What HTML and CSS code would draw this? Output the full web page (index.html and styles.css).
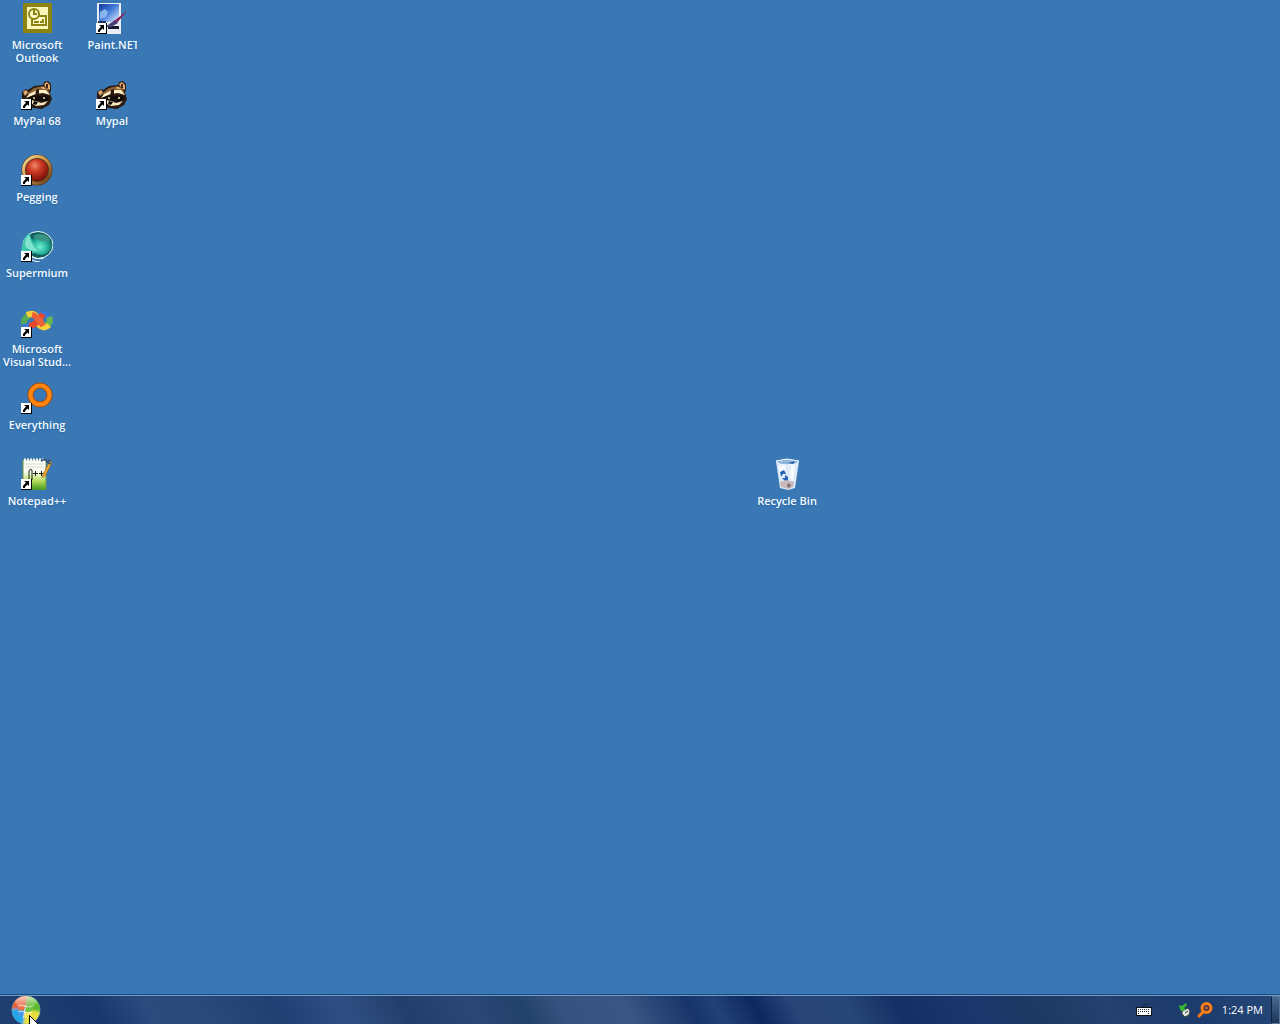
FILE: index.html
```html
<!DOCTYPE html>
<html lang="en">
<head>
<meta charset="utf-8">
<title>Desktop</title>
<link rel="stylesheet" href="styles.css">
</head>
<body>
<svg class="defs" aria-hidden="true">
  <defs>
    <radialGradient id="red" cx=".4" cy=".3" r=".7"><stop offset="0" stop-color="#f08a6c"/><stop offset=".4" stop-color="#cf3a24"/><stop offset="1" stop-color="#7c1008"/></radialGradient>
    <linearGradient id="gold" x1="0" y1="0" x2="1" y2="1"><stop offset="0" stop-color="#f6dc94"/><stop offset=".5" stop-color="#c98f42"/><stop offset="1" stop-color="#5c3616"/></linearGradient>
    <radialGradient id="teal" cx=".45" cy=".6" r=".6"><stop offset="0" stop-color="#6df0d0"/><stop offset=".6" stop-color="#25b09a"/><stop offset="1" stop-color="#0f6663"/></radialGradient>
    <linearGradient id="sky" x1="0" y1="0" x2="1" y2="1"><stop offset="0" stop-color="#123a9c"/><stop offset=".45" stop-color="#3f78d8"/><stop offset="1" stop-color="#e4f0ff"/></linearGradient>
    <linearGradient id="note" x1="0" y1="0" x2="0" y2="1"><stop offset=".4" stop-color="#fbfdf2"/><stop offset=".7" stop-color="#b5dc5a"/><stop offset="1" stop-color="#3f9a1e"/></linearGradient>
    <linearGradient id="shine" x1="0" y1="0" x2="0" y2="1"><stop offset="0" stop-color="#fff" stop-opacity=".7"/><stop offset="1" stop-color="#fff" stop-opacity="0"/></linearGradient>
    <filter id="soft"><feGaussianBlur stdDeviation="1.2"/></filter>
    <clipPath id="orb"><circle cx="15" cy="15" r="14"/></clipPath>
  </defs>
  <symbol id="arrow" viewBox="0 0 32 32">
    <path d="M0 21h11v11H0z" fill="#000"/><path d="M0 21h10v10H0z" fill="#fff"/>
    <path d="M3 23h5v5l-1.500-1.500L4 29v1H2v-2l3-3.500z" fill="#000"/>
  </symbol>
  <symbol id="raccoon" viewBox="0 0 32 32">
    <path d="M1 14l4-3 2 1 6-4 9-1 1-3 4-1 3 3v6l-1 3 2 6-3 6-7 4-9-1-8-5-3-5z" fill="#2a1a10"/>
    <path d="M2 14l3-2 2 2-3 4zM23 6l3-2 3 3v5l-4-2z" fill="#e0ad74"/>
    <path d="M25 6l2 0 0 4-2 0z" fill="#4a2414"/>
    <path d="M8 14l5-4 9-2 5 3 2 6-5-4-6-1-9 4-5 1z" fill="#8b6236"/>
    <path d="M8 16l8-4 9 0 4 5-7-2-7 1-10 4z" fill="#fff0c8"/>
    <path d="M7 20l6-3 6 1 7-1 3 3-4 4-8-1-8 1z" fill="#120c0a"/>
    <path d="M9 22l6 1 5 2 7-2-4 4-8 1-5-3z" fill="#fbeaC0"/>
    <path d="M15 12l3-1 0 6-4 2z" fill="#2b190f"/>
    <path d="M20 9l3 0 2 2-4 0z" fill="#d9aa70"/>
    <circle cx="13" cy="20" r="1" fill="#f7e4a8"/><circle cx="23" cy="20" r="1" fill="#f7e4a8"/>
    <path d="M13 23l4 1-2 3-3-1z" fill="#0a0808"/>
  </symbol>
</svg>

<main class="desktop">
  <button class="icon c1 r1">
    <svg viewBox="0 0 32 32" aria-hidden="true"><path d="M2 1h29v30H2z" fill="#8b8412"/><path d="M6 5h21v22H6z" fill="#fbf5b8"/><path d="M11 14h14v9H11z" fill="#fff9c8" stroke="#8b8412" stroke-width="2"/><circle cx="13" cy="12" r="5" fill="#fff9c8" stroke="#8b8412" stroke-width="2"/><path d="M13 8v4h3M13 20h5M19 20h3v-3" fill="none" stroke="#8b8412" stroke-width="2"/></svg>
    <span class="label">Microsoft Outlook</span>
  </button>
  <button class="icon c2 r1">
    <svg viewBox="0 0 32 32" aria-hidden="true"><path d="M1 1h24v31H1z" fill="#e9edf5"/><path d="M3 2h20v18H3z" fill="url(#sky)"/><path d="M4 10l5-3 3 3-2 5-6 2z" fill="#8ab4ec"/><path d="M2 19h8v2H2z" fill="#26345c"/><path d="M12 24h11v3H12z" fill="#16182c"/><path d="M31 9L18 19l2 3z" fill="#8c1d4c"/><path d="M19 18l3 3-7 4-6 0z" fill="#4b3f78"/><use href="#arrow"/></svg>
    <span class="label clipped">Paint.NET</span>
  </button>
  <button class="icon c1 r2">
    <svg viewBox="0 0 32 32" aria-hidden="true"><use href="#raccoon"/><use href="#arrow"/></svg>
    <span class="label">MyPal 68</span>
  </button>
  <button class="icon c2 r2">
    <svg viewBox="0 0 32 32" aria-hidden="true"><use href="#raccoon"/><use href="#arrow"/></svg>
    <span class="label">Mypal</span>
  </button>
  <button class="icon c1 r3">
    <svg viewBox="0 0 32 32" aria-hidden="true"><circle cx="16" cy="16" r="15.500" fill="#5a3418"/><circle cx="16" cy="16" r="13.500" fill="none" stroke="url(#gold)" stroke-width="3"/><circle cx="16" cy="16" r="11" fill="url(#red)"/><use href="#arrow"/></svg>
    <span class="label">Pegging</span>
  </button>
  <button class="icon c1 r4">
    <svg viewBox="0 0 32 32" aria-hidden="true"><ellipse cx="17" cy="15" rx="15" ry="13.500" fill="#14605f" stroke="#e8fffa"/><ellipse cx="20" cy="15" rx="11" ry="10" fill="url(#teal)"/><path d="M12 6q7-4 14 0 4 3 2 5-9 2-16-5z" fill="#3a9484"/><path d="M0 23Q1 9 8 3q3 9 10 18-8 5-18 2z" fill="#3dc5ae"/><path d="M8 4q1 10 9 17-6 1-11-3T8 4z" fill="#7fe4cb"/><path d="M11 30q4 2 8 2M11 26q4 4 12 2" stroke="#fff" fill="none"/><use href="#arrow"/></svg>
    <span class="label">Supermium</span>
  </button>
  <button class="icon c1 r5">
    <svg viewBox="0 0 32 32" aria-hidden="true"><g fill="none" stroke-width="6"><path d="M13 21Q6 24 4 17" stroke="#3979db"/><path d="M3 18Q2 12 9 9" stroke="#55a957"/><path d="M6 9q6-3 10 2" stroke="#f3cf38"/><path d="M19 9q6-3 9 3" stroke="#3878da"/><path d="M28 11q3 6-4 9" stroke="#66b753"/><path d="M28 19q-5 5-11-1" stroke="#f4d134"/><path d="M8 20Q15 20 22 8" stroke="#e54a2c"/><path d="M11 9q6 1 11 11" stroke="#ee6239"/></g><use href="#arrow"/></svg>
    <span class="label">Microsoft Visual Stud...</span>
  </button>
  <button class="icon c1 r6">
    <svg viewBox="0 0 32 32" aria-hidden="true"><circle cx="19" cy="13" r="9.500" fill="none" stroke="#a34e0d" stroke-width="6"/><circle cx="19" cy="13" r="9.500" fill="none" stroke="#ff8610" stroke-width="4"/><use href="#arrow"/></svg>
    <span class="label">Everything</span>
  </button>
  <button class="icon c1 r7">
    <svg viewBox="0 0 32 32" aria-hidden="true"><path d="M2 2h23v30H2z" fill="url(#note)" stroke="#71923e"/><path d="M4 6h19M4 9h19" stroke="#d6e0da"/><path d="M3 2h22" stroke="#eef4fa" stroke-width="3" stroke-dasharray="2 1"/><path d="M8 21V13q1-3 3-1v10M12 15.500h5M14.500 13v5M18 15.500h5M20.500 13v5" fill="none" stroke="#182016"/><path d="M29 3L22 16l-1 4 3-2L31 5z" fill="#e9a52b" stroke="#936321" stroke-width=".5"/><path d="M20 3l4-2 2 3 4-2M26 4l4 2" stroke="#34506f" stroke-width="1.500" fill="none"/><use href="#arrow"/></svg>
    <span class="label">Notepad++</span>
  </button>
  <button class="icon c11 r7">
    <svg viewBox="0 0 32 32" aria-hidden="true"><path d="M5 3l11-2 12 2-4 27-7 2-8-2z" fill="#dceafa"/><path d="M5 3l11-2 12 2-3 3-9 1-8-1z" fill="#90b8df" stroke="#f6fbff"/><path d="M17 5l7-2-2 3z" fill="#285e9d"/><path d="M8 8h7l-2 9-4 3zM20 8l4-1-2 16-3-3z" fill="#f8fcff"/><path d="M9 14l4-2 2 4h-3l-2 3zM11 20l3 3h3v-4l-3-2v3z" fill="#2862b8"/><path d="M9 24l6-2 8 2-1 5-5 2-7-2z" fill="#c8b8b8"/><path d="M17 25l3 2-2 3-2-2z" fill="#776d77"/></svg>
    <span class="label">Recycle Bin</span>
  </button>
</main>

<footer class="taskbar">
  <button class="start" aria-label="Start">
    <svg viewBox="0 0 30 30" aria-hidden="true"><circle cx="15" cy="15" r="14.500" fill="#6d8297"/><g clip-path="url(#orb)"><path d="M0 0h30v30H0z" fill="#4aa6cf"/><g filter="url(#soft)"><path d="M0 0h17l-3 14-14 1z" fill="#e86136"/><path d="M17 0h13v17l-15-3z" fill="#5dbb2e"/><path d="M0 14l14-1-2 17H0z" fill="#22a7ea"/><path d="M15 14l15 3v13H12z" fill="#e7df3c"/></g><path d="M8 11q4-2 6 0l-1 5q-3-2-6 0z" fill="#ef7040"/><path d="M15 11q3 2 7 0l-1 5q-4 2-7 0z" fill="#6fc540"/><path d="M7 17q3-2 6 0l-1 5q-3-2-6 0z" fill="#479be6"/><path d="M14 17q3 2 7 0l-1 5q-4 2-7 0z" fill="#ffe651"/><path d="M7 11q4-2 7 0t8 0M7 17q3-2 6 0t8 0M14.500 10l-2 13" stroke="#fff" stroke-opacity=".7" fill="none"/><ellipse cx="15" cy="7" rx="11" ry="6" fill="url(#shine)"/></g></svg>
    <svg class="pointer" viewBox="0 0 12 19" aria-hidden="true"><path d="M.5 .5v16l4-4 3 6 2-1-3-6h5z" fill="#fff" stroke="#000"/></svg>
  </button>
  <div class="tray">
    <button class="keys" aria-label="Keyboard"><svg viewBox="0 0 16 16" aria-hidden="true"><path d="M7 5q0-2 2-2t2-2" fill="none" stroke="#18202c"/><path d="M0 5h16v9H0z" fill="#10141c"/><path d="M1 6h14v7H1z" fill="#fff"/><path d="M2 7.500h12M2 9.500h12M2 11.500h2M12 11.500h2" stroke="#222a38" stroke-dasharray="1 1"/></svg></button>
    <button aria-label="Safely Remove Hardware"><svg viewBox="0 0 16 16" aria-hidden="true"><path d="M5 9l6-3 2 3-1 4-4 2-3-3z" fill="#dce2dd" stroke="#35403e"/><path d="M8 11l3-2" stroke="#35403e"/><path d="M2 3l3 1 4-3 1 2-3 3 2 2-5 1-1-2z" fill="#37bb35"/></svg></button>
    <button aria-label="Everything search"><svg viewBox="0 0 16 16" aria-hidden="true"><path d="M6 10l-4 4" stroke="#ff7e14" stroke-width="3" stroke-linecap="round"/><circle cx="9.500" cy="6" r="4.500" fill="#51354a" stroke="#ff7e14" stroke-width="3"/><circle cx="9.500" cy="6" r="1" fill="#ff9b3c"/></svg></button>
    <time class="clock">1:24 PM</time>
    <button class="peek" aria-label="Show desktop"></button>
  </div>
</footer>
</body>
</html>
```
FILE: styles.css
```css
* { box-sizing: border-box; }

body {
  margin: 0;
  min-height: 100vh;
  display: flex;
  flex-direction: column;
  overflow: hidden;
  background: #3a78b5;
  color: #fff;
  font: 600 11px/13px "Open Sans", "Noto Sans", sans-serif;
}

button {
  margin: 0;
  padding: 0;
  border: 0;
  background: none;
  color: inherit;
  font: inherit;
}

svg { display: block; }

.defs {
  position: absolute;
  width: 0;
  height: 0;
}

/* Desktop icons snap to a 75 x 76 grid */
.desktop {
  flex: 1;
  display: grid;
  grid-template-columns: repeat(auto-fill, 75px);
  grid-auto-rows: 76px;
}

.icon {
  display: flex;
  flex-direction: column;
  align-items: center;
  gap: 4px;
  padding: 2px 1px 0 0;
}

.icon svg {
  width: 32px;
  height: 32px;
  flex: none;
}

.label {
  max-width: 72px;
  text-align: center;
  color: #f2fbff;
  text-shadow: 0 1px 2px #2a639e;
}

.clipped {
  max-width: 49px;
  overflow: hidden;
  white-space: nowrap;
}

.c1 { grid-column: 1; }
.c2 { grid-column: 2; }
.c11 { grid-column: 11; }
.r1 { grid-row: 1; }
.r2 { grid-row: 2; }
.r3 { grid-row: 3; }
.r4 { grid-row: 4; }
.r5 { grid-row: 5; }
.r6 { grid-row: 6; }
.r7 { grid-row: 7; }

.taskbar {
  height: 30px;
  display: flex;
  justify-content: space-between;
  border-top: 1px solid #1d4b80;
  box-shadow: inset 0 1px #6b9cc9;
  background: linear-gradient(60deg, #1f3f70 0%, #1a376c 8%, #2c4a7d 12%, #2a4a7c 16%, #213f72 22%, #304e84 27%, #223f6b 32%, #2b4776 37%, #22426b 41%, #36537f 44%, #3a5684 49%, #17346a 54%, #234176 56%, #0c2860 59%, #284478 62%, #284678 66%, #142f64 70%, #1b376d 76%, #1c3962 80%, #24416f 86%, #1c3a6c 92%, #254879 100%);
}

.start {
  position: relative;
  margin-left: 11px;
  width: 30px;
  height: 30px;
}

.pointer {
  position: absolute;
  left: 18px;
  top: 20px;
  width: 12px;
  height: 19px;
}

.tray {
  display: flex;
  align-items: center;
  gap: 4px;
}

.tray svg {
  width: 16px;
  height: 16px;
}

.keys { margin-right: 21px; }

.clock {
  margin: 0 4px 0 5px;
  font-weight: 400;
}

.peek {
  align-self: stretch;
  width: 9px;
  margin-top: 1px;
  border: 1px solid #577598;
  border-left-color: #0e2344;
  background: linear-gradient(#49698f, #1c3559);
}
```
